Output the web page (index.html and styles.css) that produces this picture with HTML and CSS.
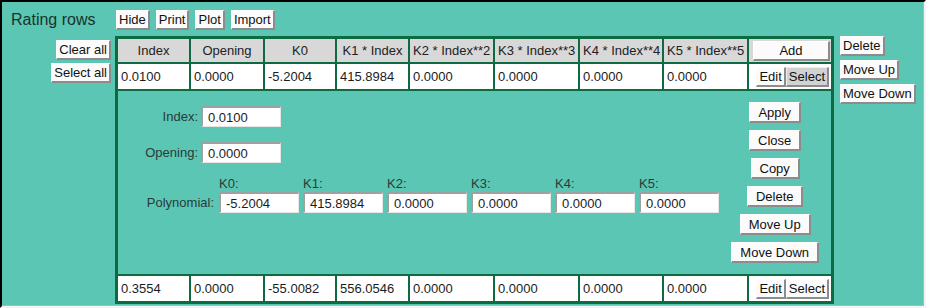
FILE: index.html
```html
<!DOCTYPE html>
<html>
<head>
  <title>Rating rows</title>
  <link rel="stylesheet" href="styles.css">
</head>
<body>
  <div class="frame">
    <div class="title-row">
      <div class="title">Rating rows</div>
      <div class="toolbar">
        <button>Hide</button>
        <button>Print</button>
        <button>Plot</button>
        <button>Import</button>
      </div>
    </div>

    <div class="main">
      <div class="side-left">
        <button>Clear all</button>
        <button>Select all</button>
      </div>

      <table class="rows">
        <colgroup>
          <col style="width:71px">
          <col style="width:72px">
          <col style="width:70px">
          <col style="width:71px">
          <col style="width:83px">
          <col style="width:83px">
          <col style="width:82px">
          <col style="width:83px">
          <col style="width:82px">
        </colgroup>
        <tr class="head">
          <th>Index</th>
          <th>Opening</th>
          <th>K0</th>
          <th>K1 * Index</th>
          <th>K2 * Index**2</th>
          <th>K3 * Index**3</th>
          <th>K4 * Index**4</th>
          <th>K5 * Index**5</th>
          <th class="ops"><button class="add">Add</button></th>
        </tr>
        <tr class="data">
          <td>0.0100</td>
          <td>0.0000</td>
          <td>-5.2004</td>
          <td>415.8984</td>
          <td>0.0000</td>
          <td>0.0000</td>
          <td>0.0000</td>
          <td>0.0000</td>
          <td class="ops"><button>Edit</button><button class="selected">Select</button></td>
        </tr>
        <tr>
          <td colspan="9" class="editor">
            <div class="editor-body">
              <div class="fields">
                <div class="field">
                  <label class="lbl" for="ed-index">Index:</label>
                  <input id="ed-index" type="text" value="0.0100">
                </div>
                <div class="field">
                  <label class="lbl" for="ed-opening">Opening:</label>
                  <input id="ed-opening" type="text" value="0.0000">
                </div>
                <div class="poly">
                  <span class="poly-lbl">Polynomial:</span>
                  <div class="coef"><label>K0:</label><input type="text" value="-5.2004"></div>
                  <div class="coef"><label>K1:</label><input type="text" value="415.8984"></div>
                  <div class="coef"><label>K2:</label><input type="text" value="0.0000"></div>
                  <div class="coef"><label>K3:</label><input type="text" value="0.0000"></div>
                  <div class="coef"><label>K4:</label><input type="text" value="0.0000"></div>
                  <div class="coef"><label>K5:</label><input type="text" value="0.0000"></div>
                </div>
              </div>
              <div class="actions">
                <button>Apply</button>
                <button>Close</button>
                <button>Copy</button>
                <button>Delete</button>
                <button>Move Up</button>
                <button>Move Down</button>
              </div>
            </div>
          </td>
        </tr>
        <tr class="data">
          <td>0.3554</td>
          <td>0.0000</td>
          <td>-55.0082</td>
          <td>556.0546</td>
          <td>0.0000</td>
          <td>0.0000</td>
          <td>0.0000</td>
          <td>0.0000</td>
          <td class="ops"><button>Edit</button><button>Select</button></td>
        </tr>
      </table>

      <div class="side-right">
        <button>Delete</button>
        <button>Move Up</button>
        <button>Move Down</button>
      </div>
    </div>
  </div>
</body>
</html>
```

FILE: styles.css
```css
html, body {
  margin: 0;
  height: 100%;
}
body {
  font-family: "Liberation Sans", Arial, sans-serif;
  font-size: 13px;
  color: #1c1c1c;
}
.frame {
  box-sizing: border-box;
  height: 308px;
  padding: 8px 0 0 9px;
  background: #5cc6b4;
  border: 2px solid;
  border-color: #000 #f4f4f4 #f4f4f4 #000;
  box-shadow: inset -1px -1px 0 #b4b4b4;
}
button {
  margin: 0;
  padding: 1px 2px;
  font-family: inherit;
  font-size: 13px;
  line-height: 15px;
  color: #111;
  background: #fbfbfb;
  border-style: solid;
  border-width: 1px 2px 2px 1px;
  border-color: #fff #8c8c8c #8c8c8c #fff;
  cursor: pointer;
}
.title-row {
  display: flex;
  align-items: center;
  height: 20px;
}
.title {
  width: 105px;
  font-size: 16px;
  color: #17332d;
}
.toolbar {
  display: flex;
  gap: 6px;
}
.main {
  display: flex;
  align-items: flex-start;
  margin-top: 6px;
}
.side-left {
  width: 100px;
  margin-right: 4px;
  padding-top: 4px;
  display: flex;
  flex-direction: column;
  align-items: flex-end;
  gap: 3px;
}
.side-right {
  margin-left: 6px;
  display: flex;
  flex-direction: column;
  align-items: flex-start;
  gap: 4px;
}
.rows {
  table-layout: fixed;
  width: 719px;
  border-collapse: separate;
  border-spacing: 2px;
  background: #0e6a42;
  border: 1px solid #0e6a42;
}
.rows th,
.rows td {
  padding: 0 3px;
  white-space: nowrap;
  overflow: hidden;
}
.rows th {
  height: 23px;
  font-weight: normal;
  text-align: center;
  background: #d8d8d8;
  color: #222;
}
.rows td {
  height: 25px;
  background: #fff;
}
.rows th.ops,
.rows td.ops {
  padding: 0 1px 0 0;
  text-align: right;
}
.rows td.ops {
  padding-right: 2px;
}
.add {
  width: 77px;
}
.selected {
  background: #d2d2d2;
  border-color: #eee #8c8c8c #8c8c8c #eee;
}
.rows td.editor {
  height: auto;
  padding: 11px 12px 11px 0;
  background: #5cc6b4;
}
.editor-body {
  display: flex;
  justify-content: space-between;
  align-items: flex-start;
}
.fields {
  padding-top: 4px;
  color: #2a3b37;
}
.field {
  display: flex;
  align-items: center;
}
.field + .field {
  margin-top: 15px;
}
.lbl {
  width: 80px;
  margin-right: 3px;
  text-align: right;
}
.fields input {
  box-sizing: border-box;
  width: 80px;
  height: 21px;
  margin: 0;
  padding: 0 0 0 5px;
  font-family: inherit;
  font-size: 13px;
  color: #1c1c1c;
  background: #fff;
  border-style: solid;
  border-width: 2px 1px 1px 2px;
  border-color: #a0a0a0 #e6e6e6 #e6e6e6 #a0a0a0;
  outline: none;
}
.poly {
  display: flex;
  align-items: flex-end;
  margin-top: 13px;
}
.poly-lbl {
  width: 96px;
  margin-right: 5px;
  text-align: right;
  line-height: 21px;
}
.coef {
  display: flex;
  flex-direction: column;
  margin-right: 4px;
}
.coef label {
  line-height: 15px;
  margin-bottom: 1px;
}
.actions {
  display: flex;
  flex-direction: column;
  align-items: center;
  gap: 7px;
}
.actions button {
  padding: 2px 8px 1px;
}
```
